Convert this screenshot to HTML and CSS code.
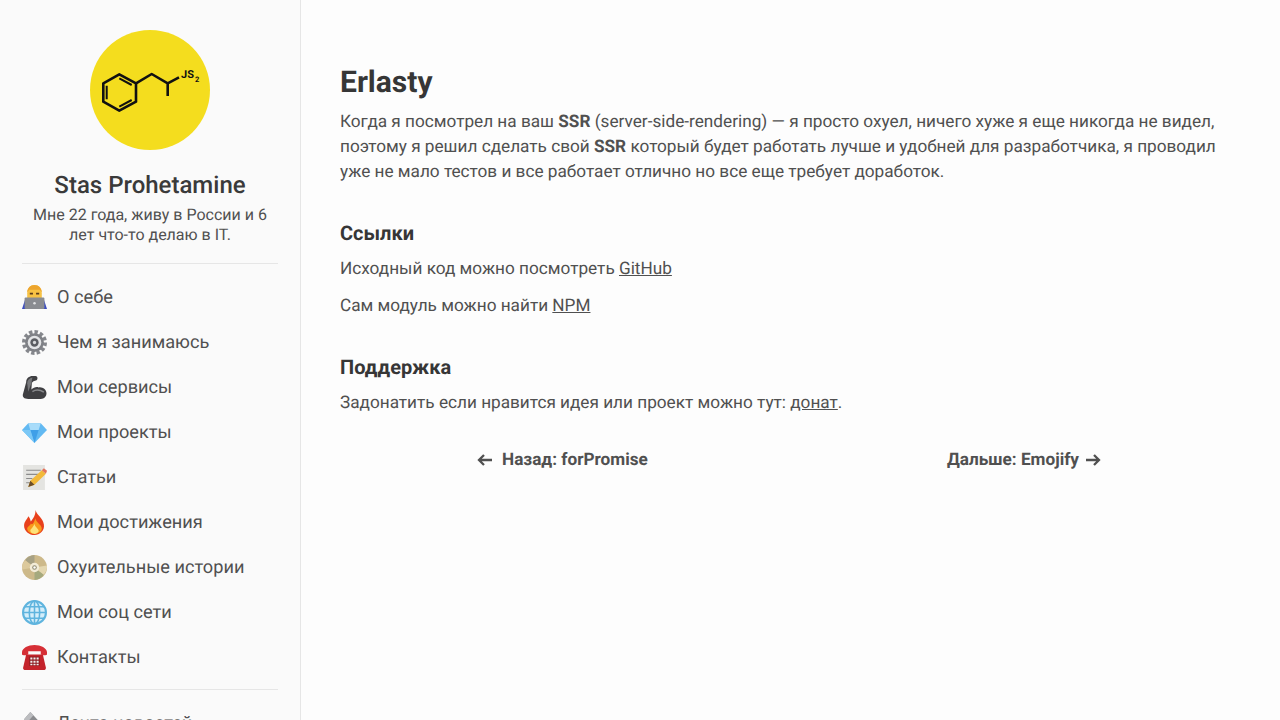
FILE: index.html
```html
<!DOCTYPE html>
<html lang="ru">
    <head>
        <meta charset="utf-8">
        <title>Erlasty</title>
        <link rel="stylesheet" href="styles.css">
    </head>
    <body>
        <aside class="sidebar">
            <svg class="avatar" viewBox="0 0 120 120">
                <circle cx="60" cy="60" r="60" fill="#f4dd1e"/>
                <g fill="none" stroke="#111" stroke-width="2.600" stroke-linejoin="round">
                    <path d="M13.300 53.300 29.300 44.300 46 53.300V71.700L29.300 80.700 13.300 71.700Z"/>
                    <path d="M16.700 55.700V69.300M29.300 48.300 41.700 55M29.300 76.700 41.700 70" stroke-width="2"/>
                    <path d="M46 53.300 61.700 44 77.700 53.300 89 47.300M77.700 53.300V66"/>
                </g>
                <text class="avatar-js" x="91" y="48.300">JS</text>
                <text class="avatar-sub" x="105" y="51.500">2</text>
            </svg>
            <h2 class="name">Stas Prohetamine</h2>
            <p class="about">Мне 22 года, живу в России и 6 лет что-то делаю в IT.</p>
            <hr class="line">
            <ul class="menu">
                <li>
                    <svg class="emoji" viewBox="0 0 24 24">
                        <path d="M0 23 3 14H21L24 23Z" fill="#3b4cc0"/>
                        <path d="M5 8C5 3 8 0 12 0S19 3 19 8V14H5Z" fill="#f7c244"/>
                        <path d="M5 7C5 3 8 0 12 0S19 3 19 7L17 4.500H7Z" fill="#eda52e"/>
                        <path d="M7.500 7.500H10.500V9H7.500ZM13.500 7.500H16.500V9H13.500Z" fill="#5a3a18"/>
                        <rect x="2.500" y="12" width="19" height="11" rx="1" fill="#8a8c91"/>
                        <circle cx="12" cy="17.500" r="1.200" fill="#e0e1e3"/>
                    </svg>
                    <a href="#">О себе</a>
                </li>
                <li>
                    <svg class="emoji" viewBox="0 0 24 24">
                        <circle cx="12" cy="12" r="10" fill="none" stroke="#85878c" stroke-width="4" stroke-dasharray="3.200 2"/>
                        <circle cx="12" cy="12" r="9" fill="#7f8186"/>
                        <circle cx="12" cy="12" r="6.500" fill="#e3e4e6"/>
                        <circle cx="12" cy="12" r="4" fill="#5b5d62"/>
                        <circle cx="12" cy="12" r="1.600" fill="#d8d9db"/>
                    </svg>
                    <a href="#">Чем я занимаюсь</a>
                </li>
                <li>
                    <svg class="emoji" viewBox="0 0 24 24">
                        <path d="M6 23C2 23 0 21 1 18L4 7C4 3 7 1 10 1H13C15 1 15.500 4 14 5L11 6 9.500 7.500 9 14C11 12 14 11 16 12 19 11 24 14 23.500 18 23 22 20 23 17 23Z" fill="#3f3f42"/>
                        <path d="M5 8C5 5 7 3 10 2.500L9 8 6 16Z" fill="#77787b"/>
                        <path d="M10 16C13 14 17 14 21 16.500" stroke="#88898c" stroke-width="1.500" fill="none"/>
                    </svg>
                    <a href="#">Мои сервисы</a>
                </li>
                <li>
                    <svg class="emoji" viewBox="0 0 24 24">
                        <path d="M6 3H18L24 9.500 12 22 0 9.500Z" fill="#62b9f2"/>
                        <path d="M6 3H18L16 9.500H8Z" fill="#a8dcfa"/>
                        <path d="M8 9.500H16L12 22Z" fill="#3f9fe8"/>
                        <path d="M0 9.500H8L12 22Z" fill="#7cc8f6"/>
                    </svg>
                    <a href="#">Мои проекты</a>
                </li>
                <li>
                    <svg class="emoji" viewBox="0 0 24 24">
                        <rect x="1" y="0" width="21" height="24" fill="#e4e4e1"/>
                        <path d="M4 5H18M4 9H16M4 13H10M4 17H8" stroke="#8b8b8b" stroke-width="1"/>
                        <path d="M6 21 8 15 19 5 23 8.500 12 19Z" fill="#f2b93a"/>
                        <path d="M19 5 21 3 24 5.500 23 8.500Z" fill="#e2725b"/>
                        <path d="M6 21 8 15 12 19Z" fill="#6b4e2a"/>
                    </svg>
                    <a href="#">Статьи</a>
                </li>
                <li>
                    <svg class="emoji" viewBox="0 0 24 24">
                        <path d="M13 0C14 5 20 7 21 14 22 20 17 24 12 24S2 20 2 15C2 11 5 9 6 6 8 8 8 10 8.500 11 11 8 13 5 13 0Z" fill="#e8401c"/>
                        <path d="M13 8C13 12 19 14 19 18 19 21 15 23 12 23S5 21 5 18C5 16 8 15 8.500 13 10 15 11 13 13 8Z" fill="#f99a1c"/>
                        <path d="M12 13C12 16 16 18 16 20 16 22 13 23 12 23S8 22 8 20C8 18 11 17 12 13Z" fill="#fde27a"/>
                    </svg>
                    <a href="#">Мои достижения</a>
                </li>
                <li>
                    <svg class="emoji" viewBox="0 0 24 24">
                        <circle cx="12" cy="12" r="12" fill="#cdb98a"/>
                        <path d="M12 12 3 5A12 12 0 0 1 12 0Z" fill="#a7a184"/>
                        <path d="M12 12 21 19A12 12 0 0 1 12 24Z" fill="#a5a97e"/>
                        <path d="M12 12 24 10A12 12 0 0 1 21 19Z" fill="#e4d7b0"/>
                        <path d="M12 12 0 14A12 12 0 0 1 3 5Z" fill="#dcc99c"/>
                        <circle cx="12" cy="12" r="4.500" fill="#f3ecd8"/>
                        <circle cx="12" cy="12" r="2.200" fill="#8f8a72"/>
                        <circle cx="12" cy="12" r="1.200" fill="#fdfdfb"/>
                    </svg>
                    <a href="#">Охуительные истории</a>
                </li>
                <li>
                    <svg class="emoji" viewBox="0 0 24 24">
                        <circle cx="12" cy="12" r="11" fill="#d5eefa" stroke="#5fb4de" stroke-width="2"/>
                        <g fill="none" stroke="#5fb4de" stroke-width="1.500">
                            <ellipse cx="12" cy="12" rx="5" ry="11"/>
                            <path d="M12 1V23M1 12H23M3 6.500H21M3 17.500H21"/>
                        </g>
                    </svg>
                    <a href="#">Мои соц сети</a>
                </li>
                <li>
                    <svg class="emoji" viewBox="0 0 24 24">
                        <path d="M4 9H20L23 22C23 23 22 24 21 24H3C2 24 1 23 1 22Z" fill="#c4232b"/>
                        <path d="M0 7C0 3 6 0 12 0S24 3 24 7V9C24 10 19 10 18 9V6H6V9C5 10 0 10 0 9Z" fill="#d62f36"/>
                        <path d="M7 11H17V20H7Z" fill="#8e1a20"/>
                        <path d="M8 12H10V14H8ZM11 12H13V14H11ZM14 12H16V14H14ZM8 15H10V17H8ZM11 15H13V17H11ZM14 15H16V17H14ZM8 18H10V19.500H8ZM11 18H13V19.500H11ZM14 18H16V19.500H14Z" fill="#eee"/>
                    </svg>
                    <a href="#">Контакты</a>
                </li>
            </ul>
            <hr class="line line-bottom">
            <ul class="menu">
                <li>
                    <svg class="emoji" viewBox="0 0 24 24">
                        <path d="M2 8 8 1 22 16 19 22Z" fill="#8a8b8e"/>
                        <path d="M2 8 8 1 11 4 5 11Z" fill="#bcbdc0"/>
                    </svg>
                    <a href="#">Лента новостей</a>
                </li>
            </ul>
        </aside>
        <main class="content">
            <h1>Erlasty</h1>
            <p>Когда я посмотрел на ваш <b>SSR</b> (server-side-rendering) — я просто охуел, ничего хуже я еще никогда не видел, поэтому я решил сделать свой <b>SSR</b> который будет работать лучше и удобней для разработчика, я проводил уже не мало тестов и все работает отлично но все еще требует доработок.</p>
            <h3>Ссылки</h3>
            <p>Исходный код можно посмотреть <a href="#">GitHub</a></p>
            <p>Сам модуль можно найти <a href="#">NPM</a></p>
            <h3>Поддержка</h3>
            <p>Задонатить если нравится идея или проект можно тут: <a href="#">донат</a>.</p>
            <div class="pager">
                <a href="#" class="prev">
                    <svg class="arrow" viewBox="0 0 16 14"><path d="M15 7H2M7 2 2 7 7 12"/></svg>
                    Назад: forPromise
                </a>
                <a href="#" class="next">
                    Дальше: Emojify
                    <svg class="arrow" viewBox="0 0 16 14"><path d="M1 7H14M9 2 14 7 9 12"/></svg>
                </a>
            </div>
        </main>
    </body>
</html>
```

FILE: styles.css
```css
* {
    box-sizing: border-box;
}
html, body {
    height: 100%;
}
body {
    margin: 0;
    display: flex;
    overflow: hidden;
    background: #fdfdfd;
    color: #505050;
    font-family: Roboto, "Liberation Sans", sans-serif;
    text-rendering: geometricPrecision;
}
.sidebar {
    flex: none;
    width: 301px;
    height: 720px;
    overflow: hidden;
    padding: 30px 22px 0;
    background: #fafafa;
    border-right: 1px solid #e6e6e6;
}
.avatar {
    display: block;
    width: 120px;
    height: 120px;
    margin: 0 auto;
}
.avatar-js {
    font: bold 11px Roboto, sans-serif;
    fill: #111;
}
.avatar-sub {
    font: bold 7.500px Roboto, sans-serif;
    fill: #111;
}
.name {
    margin: 20px 0 0;
    color: #3a3a3a;
    font-size: 24px;
    font-weight: 500;
    line-height: 30px;
    text-align: center;
}
.about {
    margin: 5px 0 0;
    font-size: 16px;
    line-height: 20px;
    text-align: center;
}
.line {
    height: 1px;
    margin: 18px 0 0;
    border: 0;
    background: #e6e6e6;
}
.line-bottom {
    margin-top: 9px;
}
.menu {
    margin: 11px 0 0;
    padding: 0;
    list-style: none;
}
.menu li {
    display: flex;
    align-items: center;
    gap: 10px;
    height: 45px;
    font-size: 18.200px;
}
.menu a {
    color: #505050;
    text-decoration: none;
}
.emoji {
    flex: none;
    width: 25px;
    height: 25px;
}
.content {
    flex: 1;
    padding: 61px 60px 0 39px;
    font-size: 17.200px;
    line-height: 25px;
}
.content h1 {
    margin: 0;
    color: #363636;
    font-size: 30px;
    font-weight: 700;
    line-height: 44px;
}
.content h3 {
    margin: 36px 0 0;
    color: #363636;
    font-size: 20px;
    font-weight: 700;
    line-height: 24px;
}
.content p {
    margin: 12px 0 0;
}
.content h1 + p {
    margin-top: 5px;
}
.content a {
    color: #505050;
}
.pager {
    display: flex;
    justify-content: space-between;
    margin-top: 32px;
    padding: 0 119px 0 137px;
    font-weight: 700;
}
.pager a {
    display: flex;
    align-items: center;
    text-decoration: none;
}
.prev {
    gap: 9px;
}
.next {
    gap: 6px;
}
.arrow {
    width: 16px;
    height: 14px;
    margin-bottom: 2px;
    fill: none;
    stroke: #505050;
    stroke-width: 2.300;
}
```
